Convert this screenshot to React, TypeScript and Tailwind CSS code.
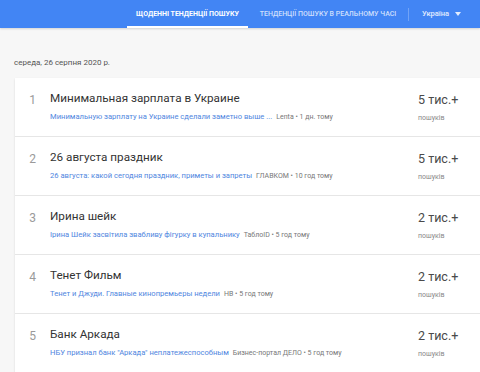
const items = [
  {
    n: 1,
    title: 'Минимальная зарплата в Украине',
    link: 'Минимальную зарплату на Украине сделали заметно выше ...',
    source: 'Lenta • 1 дн. тому',
    count: '5 тис.+',
  },
  {
    n: 2,
    title: '26 августа праздник',
    link: '26 августа: какой сегодня праздник, приметы и запреты',
    source: 'ГЛАВКОМ • 10 год тому',
    count: '5 тис.+',
  },
  {
    n: 3,
    title: 'Ирина шейк',
    link: 'Ірина Шейк засвітила звабливу фігурку в купальнику',
    source: 'ТаблоID • 5 год тому',
    count: '2 тис.+',
  },
  {
    n: 4,
    title: 'Тенет Фильм',
    link: 'Тенет и Джуди. Главные кинопремьеры недели',
    source: 'НВ • 5 год тому',
    count: '2 тис.+',
  },
  {
    n: 5,
    title: 'Банк Аркада',
    link: 'НБУ признал банк "Аркада" неплатежеспособным',
    source: 'Бизнес-портал ДЕЛО • 5 год тому',
    count: '2 тис.+',
  },
];

export default function App() {
  return (
    <div
      className="w-[480px] h-[372px] overflow-hidden bg-[#f7f7f7]"
      style={{ fontFamily: 'Roboto, "Noto Sans", sans-serif' }}
    >
      <div className="h-[28px] bg-[#4285f4] flex items-stretch shadow-[0_1px_2px_rgba(0,0,0,0.15)]">
        <div className="w-[127px]" />
        <div className="w-[121px] flex items-center justify-center border-b-[2px] border-white text-white text-[7px] font-bold pt-[2px]">
          ЩОДЕННІ ТЕНДЕНЦІЇ ПОШУКУ
        </div>
        <div className="w-[160px] flex items-center justify-center text-white/75 text-[7px] font-medium">
          ТЕНДЕНЦІЇ ПОШУКУ В РЕАЛЬНОМУ ЧАСІ
        </div>
        <div className="flex items-center">
          <div className="w-px h-[13px] bg-white/25" />
          <span className="ml-[13px] text-white/85 text-[7.5px] font-medium">Україна</span>
          <svg className="ml-[6px]" width="6" height="4" viewBox="0 0 6 4">
            <path d="M0 0h6L3 4z" fill="rgba(255,255,255,0.85)" />
          </svg>
        </div>
      </div>

      <div className="pl-[14px] pt-[29px] h-[50px] text-[8px] text-[#555]">середа, 26 серпня 2020 р.</div>

      <div className="ml-[15px] bg-white shadow-[0_1px_2px_rgba(0,0,0,0.12)]">
        {items.map((it) => (
          <div key={it.n} className="h-[59px] flex border-b border-[#e6e6e6]">
            <div className="w-[35px] pt-[13px] text-center text-[12px] text-[#9a9a9a]">{it.n}</div>
            <div className="flex-1 min-w-0 pt-[12px]">
              <div className="text-[11.7px] leading-[17px] text-[#333]">{it.title}</div>
              <div className="mt-[5px] text-[7.6px] leading-[10px] whitespace-nowrap">
                <span className="text-[#4f86e0]">{it.link}</span>
                <span className="ml-[4px] text-[#777] text-[7px]">{it.source}</span>
              </div>
            </div>
            <div className="w-[62px] pt-[13px]">
              <div className="text-[12.5px] leading-[18px] text-[#4a4a4a]">{it.count}</div>
              <div className="mt-[4px] text-[7px] leading-[10px] text-[#888]">пошуків</div>
            </div>
          </div>
        ))}
      </div>
    </div>
  );
}
